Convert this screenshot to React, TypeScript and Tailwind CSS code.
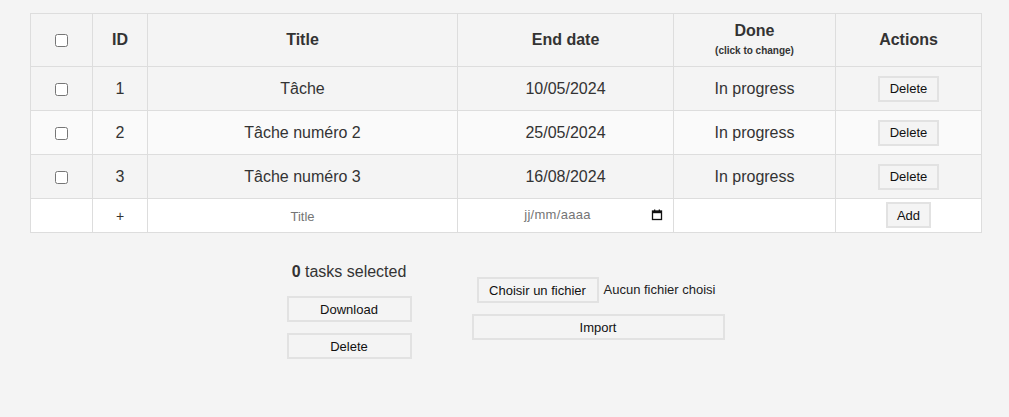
import {useState} from 'react';

interface Task {
  id: number;
  title: string;
  endDate: string;
  done: boolean;
}

const initialTasks: Task[] = [
  {id: 1, title: 'Tâche', endDate: '10/05/2024', done: false},
  {id: 2, title: 'Tâche numéro 2', endDate: '25/05/2024', done: false},
  {id: 3, title: 'Tâche numéro 3', endDate: '16/08/2024', done: false},
];

const cell = 'border border-[#dddddd] text-center p-0';
const btn = 'bg-[#f4f4f4] border-2 border-[#e2e2e2] text-[13px] text-[#111] leading-none';

const App = () => {
  const [tasks, setTasks] = useState<Task[]>(initialTasks);
  const [selected, setSelected] = useState<number[]>([]);
  const [title, setTitle] = useState<string>('');

  const toggle = (id: number) => {
    setSelected((s) => (s.includes(id) ? s.filter((x) => x !== id) : [...s, id]));
  };

  const toggleDone = (id: number) => {
    setTasks((t) => t.map((task) => (task.id === id ? {...task, done: !task.done} : task)));
  };

  const deleteTask = (id: number) => {
    setTasks((t) => t.filter((task) => task.id !== id));
    setSelected((s) => s.filter((x) => x !== id));
  };

  const addTask = () => {
    if (!title) return;
    const nextId = tasks.length ? Math.max(...tasks.map((t) => t.id)) + 1 : 1;
    setTasks([...tasks, {id: nextId, title, endDate: '', done: false}]);
    setTitle('');
  };

  return (
    <div
      className="min-h-[417px] bg-[#f4f4f4] pt-[13px] text-[#333]"
      style={{fontFamily: '"Liberation Sans", Arial, sans-serif'}}
    >
      <table className="ml-[30px] w-[951px] border-collapse table-fixed">
        <colgroup>
          <col className="w-[62px]" />
          <col className="w-[55px]" />
          <col className="w-[310px]" />
          <col className="w-[216px]" />
          <col className="w-[162px]" />
          <col className="w-[146px]" />
        </colgroup>
        <thead>
          <tr className="h-[53px] bg-[#f4f4f4]">
            <th className={cell}>
              <input type="checkbox" className="align-middle m-0 w-[13px] h-[13px]" />
            </th>
            <th className={`${cell} text-base font-bold`}>ID</th>
            <th className={`${cell} text-base font-bold`}>Title</th>
            <th className={`${cell} text-base font-bold`}>End date</th>
            <th className={`${cell} font-bold align-top pt-[8px]`}>
              <div className="text-base leading-[18px]">Done</div>
              <div className="text-[10px] leading-[12px] mt-[5px]">(click to change)</div>
            </th>
            <th className={`${cell} text-base font-bold`}>Actions</th>
          </tr>
        </thead>
        <tbody>
          {tasks.map((task, index) => (
            <tr key={task.id} className={`h-[44px] ${index % 2 === 1 ? 'bg-[#fafafa]' : 'bg-[#f4f4f4]'}`}>
              <td className={cell}>
                <input
                  type="checkbox"
                  className="align-middle m-0 w-[13px] h-[13px]"
                  checked={selected.includes(task.id)}
                  onChange={() => toggle(task.id)}
                />
              </td>
              <td className={`${cell} text-base`}>{task.id}</td>
              <td className={`${cell} text-base`}>{task.title}</td>
              <td className={`${cell} text-base`}>{task.endDate}</td>
              <td className={`${cell} text-base cursor-pointer`} onClick={() => toggleDone(task.id)}>
                {task.done ? 'Done' : 'In progress'}
              </td>
              <td className={cell}>
                <button className={`${btn} w-[61px] h-[26px]`} onClick={() => deleteTask(task.id)}>
                  Delete
                </button>
              </td>
            </tr>
          ))}
          <tr className="h-[34px] bg-white">
            <td className={cell}></td>
            <td className={`${cell} text-sm`}>+</td>
            <td className={cell}>
              <input
                type="text"
                placeholder="Title"
                value={title}
                onChange={(e) => setTitle(e.target.value)}
                className="w-full text-center text-[13px] outline-none bg-transparent placeholder:text-[#757575] -mt-[1px]"
              />
            </td>
            <td className={cell}>
              <div className="flex items-center pl-[6px] pr-[10px] -mt-[1px]">
                <span className="flex-1 text-center text-[13px] text-[#757575] tracking-[0.3px]">jj/mm/aaaa</span>
                <svg width="12" height="12" viewBox="0 0 12 12" className="shrink-0">
                  <rect x="1.5" y="2" width="9" height="8.5" fill="none" stroke="#111" strokeWidth="1.3" />
                  <rect x="1.5" y="2" width="9" height="2.2" fill="#111" />
                  <rect x="3" y="0.5" width="1.3" height="2" fill="#111" />
                  <rect x="7.7" y="0.5" width="1.3" height="2" fill="#111" />
                </svg>
              </div>
            </td>
            <td className={cell}></td>
            <td className={cell}>
              <button className={`${btn} w-[45px] h-[26px] -mt-[1px]`} onClick={addTask}>
                Add
              </button>
            </td>
          </tr>
        </tbody>
      </table>

      <div className="flex justify-center items-center gap-[60px] mt-[29px] pl-[2px]">
        <div className="flex flex-col items-center w-[125px]">
          <p className="text-base leading-[20px] whitespace-nowrap">
            <span className="font-bold">{selected.length}</span> tasks selected
          </p>
          <button className={`${btn} w-[125px] h-[26px] mt-[14px]`}>Download</button>
          <button className={`${btn} w-[125px] h-[26px] mt-[11px]`}>Delete</button>
        </div>
        <div className="flex flex-col items-center w-[253px] mb-[4px]">
          <div className="flex items-center self-start ml-[5px]">
            <button className={`${btn} w-[122px] h-[26px]`}>Choisir un fichier</button>
            <span className="text-[13px] ml-[5px] text-[#222] whitespace-nowrap">Aucun fichier choisi</span>
          </div>
          <button className={`${btn} w-[253px] h-[26px] mt-[11px]`}>Import</button>
        </div>
      </div>
    </div>
  );
};

export default App;
